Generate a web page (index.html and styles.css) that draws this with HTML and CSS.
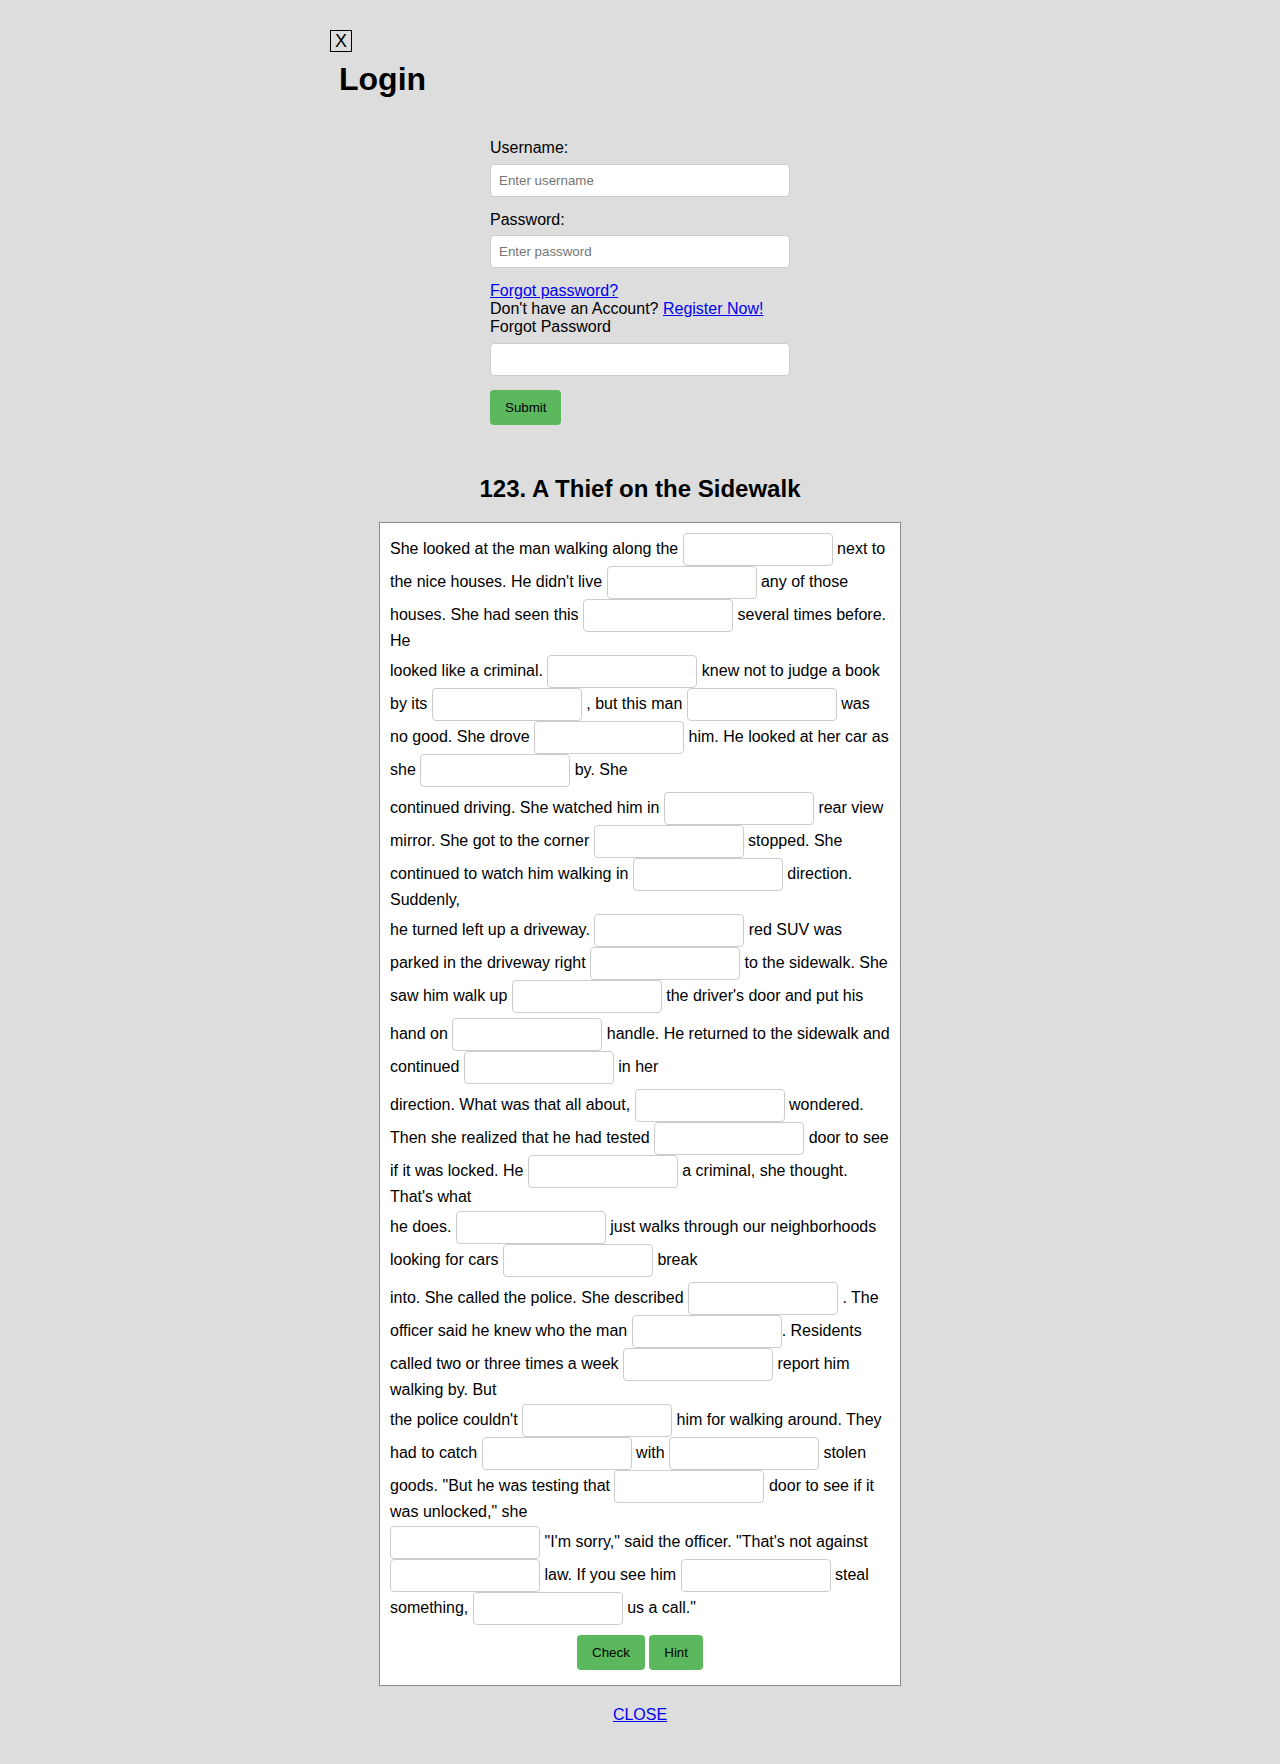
FILE: index.html
```html
<!DOCTYPE html>
<html lang="en">
<head>
<meta charset="utf-8">
<title>A Thief on the Sidewalk</title>
<link rel="stylesheet" href="styles.css">
</head>
<body>
<div class="page">
  <div class="modal-head">
    <button class="close-x" type="button">X</button>
    <h1 class="login-title">Login</h1>
  </div>

  <form class="login-form">
    <label class="field-label" for="username">Username:</label>
    <input class="field" id="username" type="text" placeholder="Enter username">
    <label class="field-label" for="password">Password:</label>
    <input class="field" id="password" type="password" placeholder="Enter password">
    <div class="links">
      <a href="#" class="link">Forgot password?</a><br>
      Don't have an Account? <a href="#" class="link">Register Now!</a><br>
      Forgot Password
    </div>
    <input class="field" type="text">
    <div class="submit-row"><button class="btn" type="button">Submit</button></div>
  </form>

  <h2 class="story-title">123. A Thief on the Sidewalk</h2>

  <div class="story">
    <div class="chunk">She looked at the man walking along the <input class="blank" type="text"> next to the nice houses. He didn't live <input class="blank" type="text"> any of those houses. She had seen this <input class="blank" type="text"> several times before. He</div>
    <div class="chunk">looked like a criminal. <input class="blank" type="text"> knew not to judge a book by its <input class="blank" type="text"> , but this man <input class="blank" type="text"> was no good. She drove <input class="blank" type="text"> him. He looked at her car as she <input class="blank" type="text"> by. She</div>
    <div class="chunk">continued driving. She watched him in <input class="blank" type="text"> rear view mirror. She got to the corner <input class="blank" type="text"> stopped. She continued to watch him walking in <input class="blank" type="text"> direction. Suddenly,</div>
    <div class="chunk">he turned left up a driveway. <input class="blank" type="text"> red SUV was parked in the driveway right <input class="blank" type="text"> to the sidewalk. She saw him walk up <input class="blank" type="text"> the driver's door and put his</div>
    <div class="chunk">hand on <input class="blank" type="text"> handle. He returned to the sidewalk and continued <input class="blank" type="text"> in her</div>
    <div class="chunk">direction. What was that all about, <input class="blank" type="text"> wondered. Then she realized that he had tested <input class="blank" type="text"> door to see if it was locked. He <input class="blank" type="text"> a criminal, she thought. That's what</div>
    <div class="chunk">he does. <input class="blank" type="text"> just walks through our neighborhoods looking for cars <input class="blank" type="text"> break</div>
    <div class="chunk">into. She called the police. She described <input class="blank" type="text"> . The officer said he knew who the man <input class="blank" type="text">. Residents called two or three times a week <input class="blank" type="text"> report him walking by. But</div>
    <div class="chunk">the police couldn't <input class="blank" type="text"> him for walking around. They had to catch <input class="blank" type="text"> with <input class="blank" type="text"> stolen goods. "But he was testing that <input class="blank" type="text"> door to see if it was unlocked," she</div>
    <div class="chunk"><input class="blank" type="text"> "I'm sorry," said the officer. "That's not against <input class="blank" type="text"> law. If you see him <input class="blank" type="text"> steal something, <input class="blank" type="text"> us a call."</div>
    <div class="actions">
      <button class="btn" type="button">Check</button>
      <button class="btn" type="button">Hint</button>
    </div>
  </div>

  <div class="close-row"><a href="#" class="link">CLOSE</a></div>
</div>
</body>
</html>
```

FILE: styles.css
```css
html, body {
  margin: 0;
  padding: 0;
}

body {
  background: #dddddd;
  color: #000;
  font-family: "Liberation Sans", Arial, sans-serif;
  font-size: 16px;
}

.page {
  min-height: 1764px;
  padding-top: 30px;
  box-sizing: border-box;
}

.modal-head {
  padding-left: 330px;
}

.close-x {
  display: block;
  width: 22px;
  height: 22px;
  padding: 0;
  margin: 0;
  border: 1px solid #000;
  background: transparent;
  color: #000;
  font-family: "Liberation Sans", Arial, sans-serif;
  font-size: 18px;
  line-height: 20px;
  text-align: center;
}

.login-title {
  margin: 9px 0 0 9px;
  font-size: 32px;
  font-weight: bold;
}

.login-form {
  width: 300px;
  margin: 41px auto 0;
}

.field-label {
  display: block;
}

.field {
  display: block;
  width: 300px;
  box-sizing: border-box;
  margin: 6.5px 0 14px;
  padding: 8px;
  border: 1px solid #ccc;
  border-radius: 4px;
  background: #fff;
  font-family: "Liberation Sans", Arial, sans-serif;
  font-size: 13.333px;
}

.field::placeholder {
  color: #757575;
}

.link {
  color: #0000ee;
  text-decoration: underline;
}

.submit-row {
  margin-top: 1px;
}

.btn {
  padding: 10px 15px;
  border: none;
  border-radius: 4px;
  background: #5cb85c;
  color: #000;
  font-family: "Liberation Sans", Arial, sans-serif;
  font-size: 13.333px;
}

.story-title {
  margin: 50px 0 19px;
  text-align: center;
  font-size: 24px;
  font-weight: bold;
}

.story {
  width: 500px;
  margin: 0 auto;
  padding: 10px;
  border: 1px solid #888;
  background: #fff;
}

.chunk + .chunk {
  margin-top: 5px;
}

.blank {
  width: 150px;
  box-sizing: border-box;
  margin: 0;
  padding: 8px;
  border: 1px solid #ccc;
  border-radius: 4px;
  background: #fff;
  font-family: "Liberation Sans", Arial, sans-serif;
  font-size: 13.333px;
}

.actions {
  margin-top: 10px;
  padding-bottom: 5px;
  text-align: center;
}

.close-row {
  margin-top: 20px;
  text-align: center;
}
```
